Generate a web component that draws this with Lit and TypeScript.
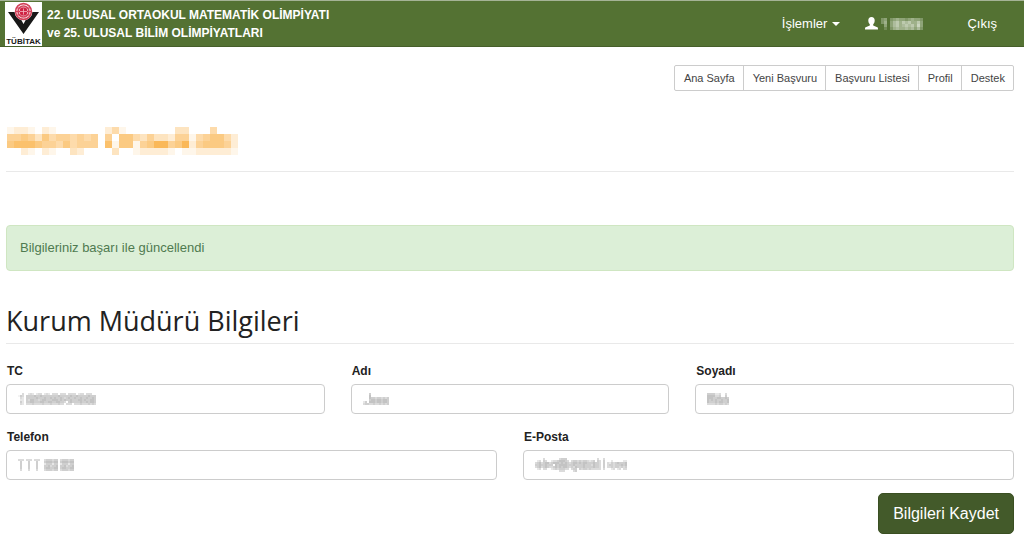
import { LitElement, html, svg, css } from "lit";
import { customElement, property } from "lit/decorators.js";

/** Draws a masked value as a grid of tinted cells; each digit is a strength from 0 to 9. */
@customElement("pixel-mask")
class PixelMask extends LitElement {
  @property({ attribute: false }) rows: string[] = [];
  @property({ type: Number }) cell = 2;

  static styles = css`
    :host { display: block; line-height: 0; }
    svg { display: block; fill: currentColor; }
  `;

  render() {
    const w = Math.max(...this.rows.map((r) => r.length)) * this.cell;
    const h = this.rows.length * this.cell;
    return html`<svg width=${w} height=${h} viewBox="0 0 ${w} ${h}" shape-rendering="crispEdges" aria-hidden="true">
      ${this.rows.map((row, y) =>
        [...row].map((c, x) =>
          c === "0" || c === " "
            ? null
            : svg`<rect x=${x * this.cell} y=${y * this.cell} width=${this.cell} height=${this.cell} fill-opacity=${Number(c) / 10} />`
        )
      )}
    </svg>`;
  }
}

const SCHOOL = [
  "122102100000002410000000330004000",
  "556536455454505066435332551456642",
  "677765546455507166156885682566652",
  "002102100320000300122221011222221",
];
const USER = ["34034544345443", "35046757675574", "04046756767584", "02035655656463"];

const TC = [
  "003002320233023203330333033330233033300",
  "143044445445444444445444445445444445444",
  "032044444544454454544543454454454454454",
  "022043554434554445554545445444554544554",
  "042044554445544554455443045444454454554",
  "032033343333433343334330333033343334343",
];
const NAME = ["0004000000000", "0005000000000", "0005443443434", "0004554554554", "2405554554554", "3443343343434"];
const SURNAME = ["44442230030", "55553340040", "55544554454", "54545445445", "54445455445", "33334344343"];
const PHONE = [
  "3330333033300344434403444344",
  "0400040004000455545504555455",
  "0400040004000244424402444244",
  "0400040004000445344504453445",
  "0400040004000455445504554455",
  "0300030003000344434403444344",
];
const EMAIL = [
  "0000300000003444000000000000000300300000000000",
  "0230430023345554303443434432340430400020000022",
  "3453455345554545434554545544454430403243454445",
  "4454454440545555444544445444354430403443444545",
  "3453454334545455434354445444454430403343443434",
  "0230330023434443303440434434333330300023023033",
  "0000000000003330000340000000000000000000000000",
];

const FIELDS = [
  { id: "tc", label: "TC", mask: TC, span: "third" },
  { id: "adi", label: "Adı", mask: NAME, span: "third" },
  { id: "soyadi", label: "Soyadı", mask: SURNAME, span: "third" },
  { id: "telefon", label: "Telefon", mask: PHONE, span: "half" },
  { id: "eposta", label: "E-Posta", mask: EMAIL, span: "half" },
];

const LINKS = ["Ana Sayfa", "Yeni Başvuru", "Başvuru Listesi", "Profil", "Destek"];

@customElement("app-root")
class AppRoot extends LitElement {
  static styles = css`
    :host {
      display: block;
      background: #fff;
      color: #222;
      font: 13px/18px "Liberation Sans", Arial, sans-serif;
    }
    * { box-sizing: border-box; }
    a { color: inherit; text-decoration: none; }
    button { font: inherit; cursor: pointer; }

    .navbar {
      display: flex;
      align-items: center;
      justify-content: space-between;
      height: 47px;
      padding: 0 27px 0 5px;
      background: #547233;
      border-top: 1px solid #a5b396;
      border-bottom: 1px solid #465f2a;
      color: #fff;
    }
    .brand {
      display: flex;
      align-items: center;
      gap: 5px;
      font-size: 12px;
      font-weight: bold;
    }
    .logo { display: block; }
    .menu { display: flex; align-items: center; }
    .drop {
      display: flex;
      align-items: center;
      gap: 5px;
      padding: 0;
      border: 0;
      background: none;
      color: inherit;
    }
    .caret {
      border: 4px solid transparent;
      border-top-color: currentColor;
      border-bottom: 0;
    }
    .user {
      display: flex;
      align-items: center;
      gap: 3px;
      margin: 0 44px 0 25px;
      color: #fff;
    }
    .user-name { color: #e9efe2; }

    main { padding: 18px 10px 4px 6px; }
    .links { display: flex; justify-content: flex-end; font-size: 11px; }
    .links a {
      height: 26px;
      padding: 0 8px 0 9px;
      border: 1px solid #ccc;
      line-height: 24px;
      color: #444;
    }
    .links a + a { margin-left: -1px; }
    .links a:first-child { border-radius: 2px 0 0 2px; }
    .links a:last-child { border-radius: 0 2px 2px 0; }

    .school {
      margin: 36px 0 53px;
      padding: 0 0 16px 1px;
      border-bottom: 1px solid #e9e9e9;
      color: #f9a62e;
    }
    .alert {
      padding: 13px;
      border: 1px solid #cfe6c2;
      border-radius: 4px;
      background: #dcefd7;
      color: #4f7a50;
      line-height: 18px;
    }
    h2 {
      margin: 31px 0 16px;
      padding-bottom: 3px;
      border-bottom: 1px solid #e9e9e9;
      font: 400 27px/38px "Open Sans", sans-serif;
      color: #222;
    }
    .form {
      display: grid;
      grid-template-columns: repeat(6, 1fr);
      column-gap: 26px;
      row-gap: 12px;
    }
    .third { grid-column: span 2; }
    .half { grid-column: span 3; }
    label {
      display: block;
      height: 24px;
      padding-left: 1px;
      line-height: 22px;
      font-size: 12px;
      font-weight: bold;
    }
    .control { display: grid; align-items: center; }
    .control > * { grid-area: 1 / 1; }
    input {
      width: 100%;
      height: 30px;
      padding: 0 10px;
      border: 1px solid #ccc;
      border-radius: 4px;
      background: #fff;
      font: inherit;
    }
    .value { padding-left: 12px; color: #888; pointer-events: none; }
    .save {
      grid-column: 1 / -1;
      justify-self: end;
      height: 41px;
      margin-top: 1px;
      padding: 0 14px;
      border: 1px solid #3a4f22;
      border-radius: 5px;
      background: #435a2a;
      color: #fff;
      font-size: 16px;
    }
  `;

  render() {
    return html`
      <header class="navbar">
        <a class="brand" href="#">
          <svg class="logo" width="37" height="44" viewBox="0 0 37 44" role="img" aria-label="TÜBİTAK">
            <rect width="37" height="44" fill="#fff" />
            <path d="M3 10h9l6.500 12 6.500-12h9L18.500 32z" fill="#181818" />
            <circle cx="18.500" cy="9.500" r="9" fill="#fff" />
            <g fill="none" stroke="#d3425a">
              <circle cx="18.500" cy="9.500" r="7.900" stroke-width="1.600" />
              <circle cx="18.500" cy="9.500" r="5.500" stroke-width="1.600" />
              <path d="M11 9.500h15M12 6h13M12 13h13" />
            </g>
            <circle cx="18.500" cy="9.500" r="4" fill="#cf2344" />
            <path d="M15 9.500h7M18.500 6.500v6" stroke="#f4b5c0" stroke-width=".8" />
            <text x="18.500" y="42" text-anchor="middle" font-family="Liberation Sans, Arial, sans-serif" font-size="8" font-weight="bold" fill="#181818">TÜBİTAK</text>
          </svg>
          <span>22. ULUSAL ORTAOKUL MATEMATİK OLİMPİYATI<br />ve 25. ULUSAL BİLİM OLİMPİYATLARI</span>
        </a>
        <nav class="menu">
          <button class="drop" type="button">İşlemler <span class="caret"></span></button>
          <a class="user" href="#" aria-label="Kullanıcı">
            <svg width="13" height="13" viewBox="0 0 13 13" fill="currentColor" aria-hidden="true">
              <path d="M6.500 0C4.400 0 3.300 1.400 3.300 3.400c0 1.500.6 3 1.500 3.900v1.200C3.500 9.300 1.300 9.700.5 10.300 0 10.800 0 11.500 0 12.500h13c0-1 0-1.700-.5-2.200C11.700 9.700 9.500 9.300 8.200 8.500V7.300c.9-.9 1.500-2.400 1.500-3.900C9.700 1.400 8.600 0 6.500 0z" />
            </svg>
            <pixel-mask class="user-name" .rows=${USER} .cell=${3}></pixel-mask>
          </a>
          <a href="#">Çıkış</a>
        </nav>
      </header>
      <main>
        <nav class="links">${LINKS.map((l) => html`<a href="#">${l}</a>`)}</nav>
        <div class="school"><pixel-mask .rows=${SCHOOL} .cell=${7}></pixel-mask></div>
        <div class="alert" role="status">Bilgileriniz başarı ile güncellendi</div>
        <h2>Kurum Müdürü Bilgileri</h2>
        <form class="form" @submit=${(e: Event) => e.preventDefault()}>
          ${FIELDS.map(
            (f) => html`<div class=${f.span}>
              <label for=${f.id}>${f.label}</label>
              <div class="control">
                <input id=${f.id} name=${f.id} type="text" />
                <pixel-mask class="value" .rows=${f.mask} .cell=${2}></pixel-mask>
              </div>
            </div>`
          )}
          <button class="save" type="submit">Bilgileri Kaydet</button>
        </form>
      </main>
    `;
  }
}
